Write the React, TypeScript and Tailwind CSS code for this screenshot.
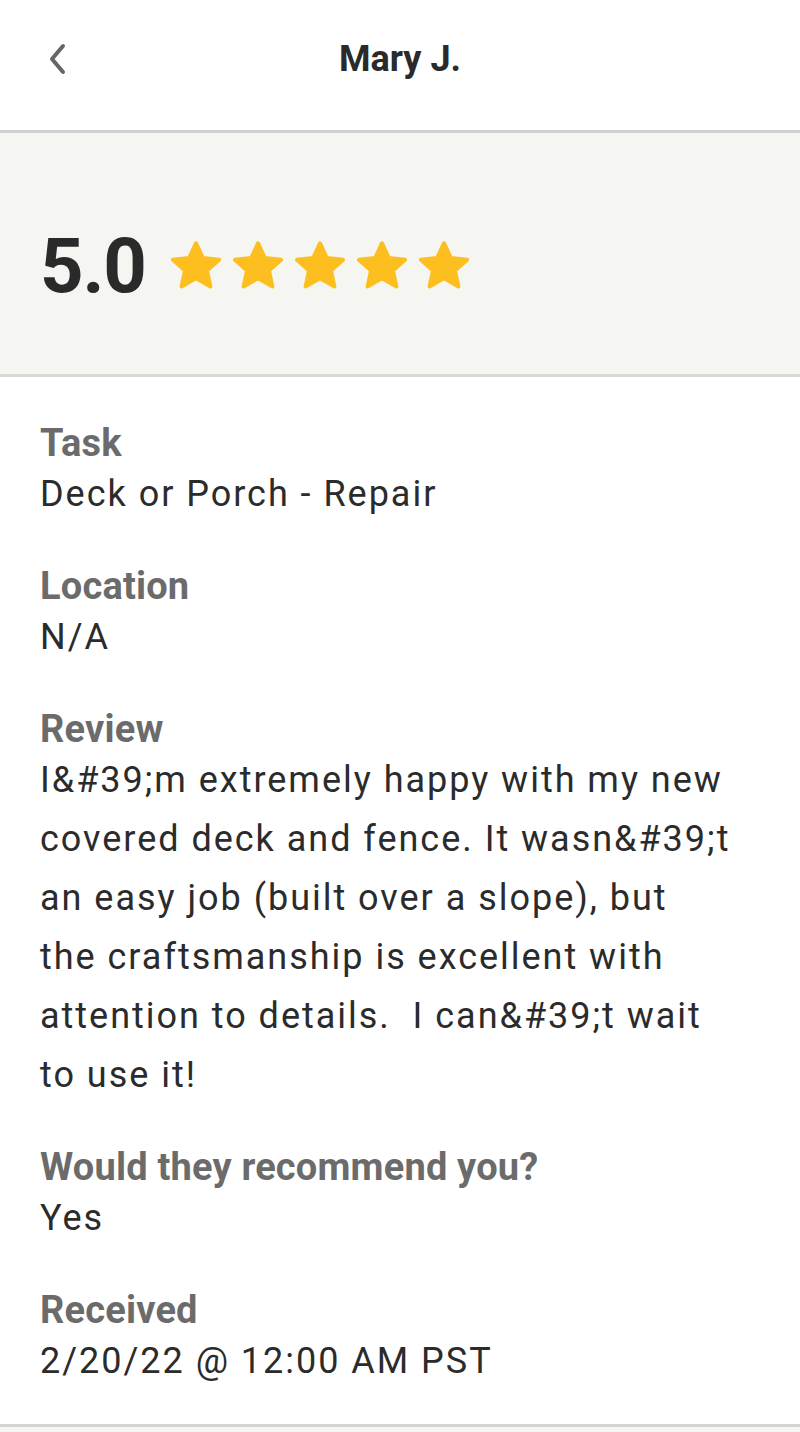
import React from 'react';

const reviewLines = [
  'I&#39;m extremely happy with my new',
  'covered deck and fence. It wasn&#39;t',
  'an easy job (built over a slope), but',
  'the craftsmanship is excellent with',
  'attention to details.\u00a0 I can&#39;t wait',
  'to use it!',
];

const StarIcon = () => (
  <svg viewBox="1.7 1.7 20.6 20.6" className="w-[50px] h-[50px]">
    <path
      d="M12 2.6l2.85 6.1 6.65.7-4.95 4.5 1.4 6.55L12 17.1l-5.95 3.35 1.4-6.55-4.95-4.5 6.65-.7z"
      fill="#fdbf20"
      stroke="#fdbf20"
      strokeWidth="1.6"
      strokeLinejoin="round"
    />
  </svg>
);

const Field = ({ label, children }: { label: string; children: React.ReactNode }) => (
  <div>
    <div className="text-[38px] leading-[44px] font-bold text-[#6b6b6b] tracking-[0.005em]">{label}</div>
    <div className="text-[36px] leading-[59px] text-[#2b2b2b] tracking-[0.055em]">{children}</div>
  </div>
);

const App = () => {
  return (
    <div className="w-[800px] min-h-[1432px] bg-[#f5f5f1]" style={{ fontFamily: 'Roboto, "Liberation Sans", sans-serif' }}>
      <header className="h-[133px] bg-white flex items-center justify-center relative border-b-[3px] border-[#d0d0d0]">
        <svg viewBox="0 0 20 32" className="absolute left-[47px] top-[43px] w-[20px] h-[32px]">
          <path d="M16 3L5 16l11 13" fill="none" stroke="#666666" strokeWidth="4" strokeLinecap="round" strokeLinejoin="round" />
        </svg>
        <h1 className="text-[36px] font-bold text-[#2a2a2a] mt-[-12px]">Mary J.</h1>
      </header>

      <section className="h-[244px] pt-[24px] flex items-center px-[40px] gap-[25px] border-b-[3px] border-[#d8d8d8]">
        <span className="text-[76px] font-bold text-[#2a2a2a] tracking-[-0.015em] leading-none">5.0</span>
        <div className="flex gap-[12px]">
          {[0, 1, 2, 3, 4].map((i) => (
            <StarIcon key={i} />
          ))}
        </div>
      </section>

      <main className="bg-white px-[40px] pt-[44px] pb-[33px] flex flex-col gap-[40px] border-b-[3px] border-[#d4d4d4]">
        <Field label="Task">Deck or Porch - Repair</Field>
        <Field label="Location">N/A</Field>
        <Field label="Review">
          {reviewLines.map((line, i) => (
            <div key={i}>{line}</div>
          ))}
        </Field>
        <Field label="Would they recommend you?">Yes</Field>
        <Field label="Received">2/20/22 @ 12:00 AM PST</Field>
      </main>
    </div>
  );
};

export default App;
